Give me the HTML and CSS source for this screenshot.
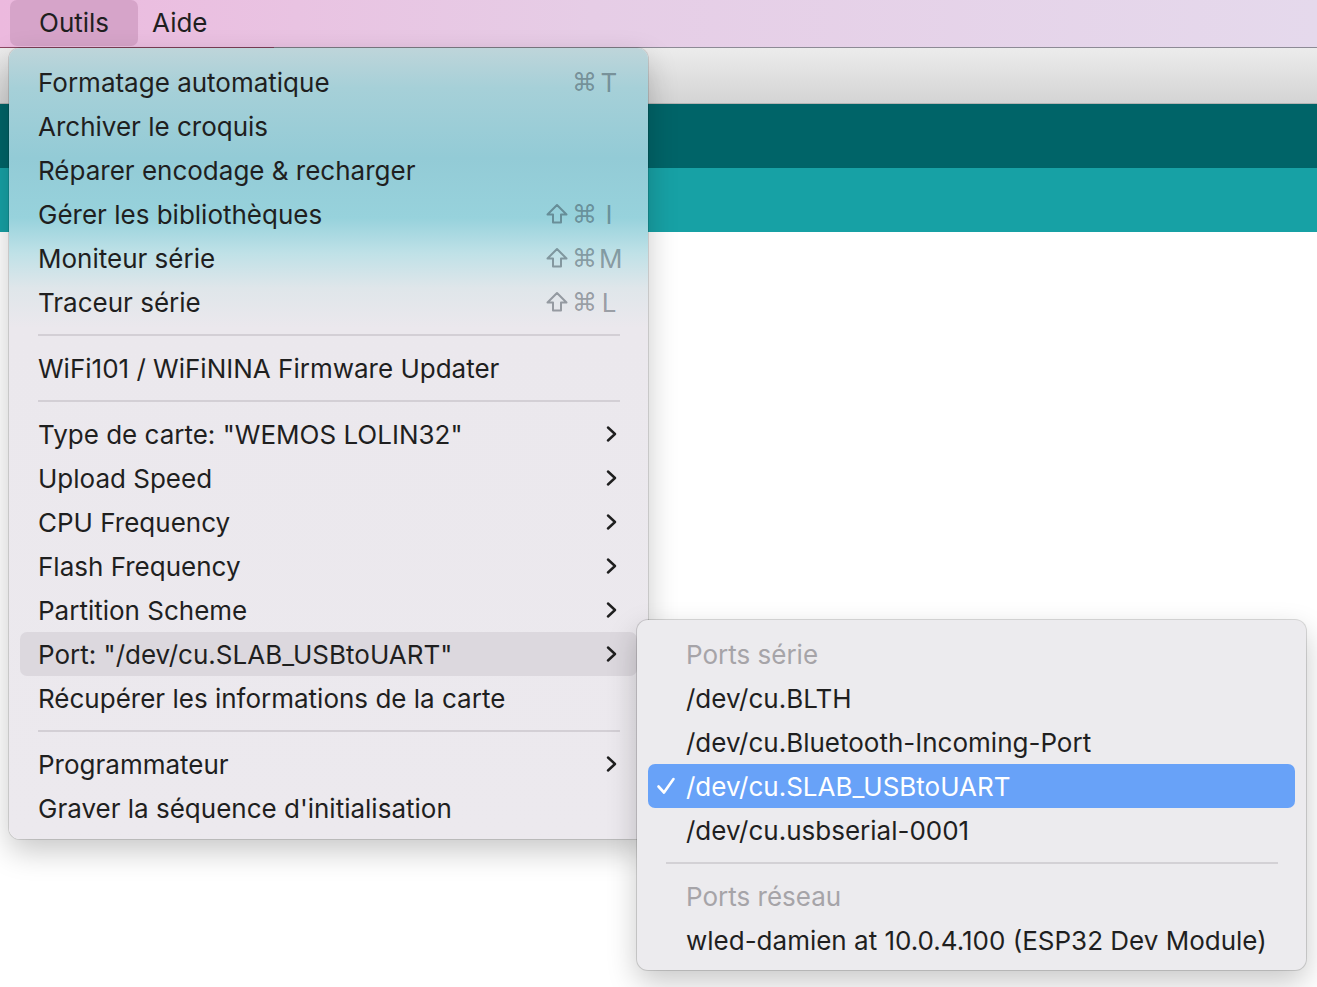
FILE: index.html
```html
<!DOCTYPE html>
<html lang="fr">
<head>
<meta charset="utf-8">
<link rel="stylesheet" href="styles.css">
</head>
<body>
<div class="menubar">
  <span class="mb-item active">Outils</span>
  <span class="mb-item">Aide</span>
</div>
<div class="window">
  <div class="toolbar"></div>
  <div class="band-dark"></div>
  <div class="band-light"></div>
</div>

<div class="menu">
  <div class="row"><span class="label">Formatage automatique</span><span class="sc"><span class="k-shift"></span><span class="k-cmd">⌘</span><span class="k-key">T</span></span></div>
  <div class="row"><span class="label">Archiver le croquis</span></div>
  <div class="row"><span class="label">Réparer encodage &amp; recharger</span></div>
  <div class="row"><span class="label">Gérer les bibliothèques</span><span class="sc"><span class="k-shift"><svg viewBox="0 0 24 24"><path d="M12 3 L21.5 12.5 L16 12.5 L16 20.5 L8 20.5 L8 12.5 L2.5 12.5 Z"/></svg></span><span class="k-cmd">⌘</span><span class="k-key">I</span></span></div>
  <div class="row"><span class="label">Moniteur série</span><span class="sc"><span class="k-shift"><svg viewBox="0 0 24 24"><path d="M12 3 L21.5 12.5 L16 12.5 L16 20.5 L8 20.5 L8 12.5 L2.5 12.5 Z"/></svg></span><span class="k-cmd">⌘</span><span class="k-key">M</span></span></div>
  <div class="row"><span class="label">Traceur série</span><span class="sc"><span class="k-shift"><svg viewBox="0 0 24 24"><path d="M12 3 L21.5 12.5 L16 12.5 L16 20.5 L8 20.5 L8 12.5 L2.5 12.5 Z"/></svg></span><span class="k-cmd">⌘</span><span class="k-key">L</span></span></div>
  <div class="sep"></div>
  <div class="row"><span class="label">WiFi101 / WiFiNINA Firmware Updater</span></div>
  <div class="sep"></div>
  <div class="row"><span class="label">Type de carte: "WEMOS LOLIN32"</span><svg class="chev" viewBox="0 0 12 16"><path d="M2 1.5 L9 8 L2 14.5"/></svg></div>
  <div class="row"><span class="label">Upload Speed</span><svg class="chev" viewBox="0 0 12 16"><path d="M2 1.5 L9 8 L2 14.5"/></svg></div>
  <div class="row"><span class="label">CPU Frequency</span><svg class="chev" viewBox="0 0 12 16"><path d="M2 1.5 L9 8 L2 14.5"/></svg></div>
  <div class="row"><span class="label">Flash Frequency</span><svg class="chev" viewBox="0 0 12 16"><path d="M2 1.5 L9 8 L2 14.5"/></svg></div>
  <div class="row"><span class="label">Partition Scheme</span><svg class="chev" viewBox="0 0 12 16"><path d="M2 1.5 L9 8 L2 14.5"/></svg></div>
  <div class="row hover"><span class="label">Port: "/dev/cu.SLAB_USBtoUART"</span><svg class="chev" viewBox="0 0 12 16"><path d="M2 1.5 L9 8 L2 14.5"/></svg></div>
  <div class="row"><span class="label">Récupérer les informations de la carte</span></div>
  <div class="sep"></div>
  <div class="row"><span class="label">Programmateur</span><svg class="chev" viewBox="0 0 12 16"><path d="M2 1.5 L9 8 L2 14.5"/></svg></div>
  <div class="row"><span class="label">Graver la séquence d'initialisation</span></div>
</div>

<div class="submenu">
  <div class="srow header">Ports série</div>
  <div class="srow">/dev/cu.BLTH</div>
  <div class="srow">/dev/cu.Bluetooth-Incoming-Port</div>
  <div class="srow selected"><svg class="check" viewBox="0 0 20 20"><path d="M2.5 10.5 L8 16.5 L17.5 3"/></svg>/dev/cu.SLAB_USBtoUART</div>
  <div class="srow">/dev/cu.usbserial-0001</div>
  <div class="ssep"></div>
  <div class="srow header">Ports réseau</div>
  <div class="srow">wled-damien at 10.0.4.100 (ESP32 Dev Module)</div>
</div>
</body>
</html>
```
FILE: styles.css
```css
html, body {
  margin: 0;
  padding: 0;
}
body {
  width: 1317px;
  height: 987px;
  overflow: hidden;
  position: relative;
  background: #ffffff;
  font-family: "Inter", "Liberation Sans", sans-serif;
  font-size: 26px;
  color: #1f1f1f;
}

/* menu bar */
.menubar {
  height: 47px;
  border-bottom: 1px solid #8c8794;
  border-image: linear-gradient(90deg, #8c4862 0, #8c4862 275px, #8d8a95 275px, #8d8a95 100%) 1;
  background: linear-gradient(90deg, #ecb9de 0%, #e6cde6 45%, #e5d9ec 100%);
  display: flex;
  align-items: flex-start;
  padding-left: 10px;
}
.mb-item {
  height: 46px;
  display: flex;
  align-items: center;
  padding: 0 14px 1px 14px;
  box-sizing: border-box;
}
.mb-item.active {
  background: #d6a4c9;
  border-radius: 7px;
  padding: 0 29px 1px 29px;
}

/* background window */
.window {
  display: flex;
  flex-direction: column;
}
.toolbar {
  height: 55px;
  background: linear-gradient(#ececec, #d4d4d4);
  border-bottom: 1px solid #b3b3b3;
}
.band-dark {
  height: 64px;
  background: #006468;
}
.band-light {
  height: 64px;
  background: #17a1a5;
}

/* main menu */
.menu {
  position: absolute;
  left: 9px;
  top: 48px;
  width: 639px;
  height: 791px;
  box-sizing: border-box;
  padding: 12px 11px 9px 11px;
  border-radius: 11px;
  background: linear-gradient(180deg,
    #bed5da 0px,
    #a6d0d8 40px,
    #93cbd6 110px,
    #97d2dc 170px,
    #bfe1e7 205px,
    #dfe6ea 240px,
    #ebe8ed 280px,
    #ece9ee 100%);
  box-shadow: 0 0 0 1px rgba(0,0,0,0.12), 0 12px 30px rgba(0,0,0,0.22);
}
.row {
  height: 44px;
  display: flex;
  align-items: center;
  padding: 0 0 0 18px;
  border-radius: 7px;
}
.row .label {
  flex: 1;
}
.row.hover {
  background: #dcd8de;
}
.sep {
  height: 2px;
  margin: 10px 17px 10px 18px;
  background: #d3cfd5;
}
.chev {
  width: 12px;
  height: 16px;
  margin-right: 19px;
  fill: none;
  stroke: #1f1f1f;
  stroke-width: 2.4;
  stroke-linecap: round;
  stroke-linejoin: round;
}
.sc {
  display: flex;
  align-items: center;
  color: rgba(30, 40, 50, 0.40);
  margin-right: 18px;
}
.k-shift {
  width: 24px;
  height: 24px;
  margin-right: 3px;
  display: flex;
}
.k-shift svg {
  width: 24px;
  height: 24px;
  fill: none;
  stroke: rgba(30, 40, 50, 0.40);
  stroke-width: 2;
  stroke-linejoin: round;
}
.k-cmd {
  font-family: "DejaVu Sans", sans-serif;
  font-size: 25px;
  width: 25px;
  text-align: center;
  margin-right: 2px;
}
.k-key {
  width: 20px;
  text-align: center;
}

/* submenu */
.submenu {
  position: absolute;
  left: 637px;
  top: 620px;
  width: 669px;
  height: 350px;
  box-sizing: border-box;
  padding: 12px 11px 8px 11px;
  border-radius: 11px;
  background: #ecebee;
  box-shadow: 0 0 0 1px rgba(0,0,0,0.14), 0 12px 30px rgba(0,0,0,0.22);
}
.srow {
  height: 44px;
  display: flex;
  align-items: center;
  padding-left: 38px;
  border-radius: 7px;
  position: relative;
}
.srow.header {
  color: #a6a4a8;
}
.srow.selected {
  background: #68a2f8;
  color: #ffffff;
}
.check {
  position: absolute;
  left: 8px;
  top: 12px;
  width: 20px;
  height: 20px;
  fill: none;
  stroke: #ffffff;
  stroke-width: 2.6;
  stroke-linecap: round;
  stroke-linejoin: round;
}
.ssep {
  height: 2px;
  margin: 10px 17px 10px 18px;
  background: #d3d1d5;
}
```
